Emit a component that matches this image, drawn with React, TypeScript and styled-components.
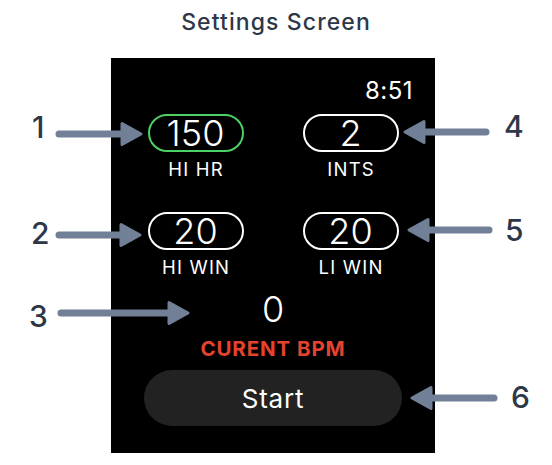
import React from "react";
import styled, { createGlobalStyle } from "styled-components";

const Global = createGlobalStyle`
  html, body { margin: 0; padding: 0; background: #ffffff; }
  body { font-family: Inter, "Noto Sans", sans-serif; }
`;

const Page = styled.div`
  width: 552px;
  height: 465px;
  display: flex;
  flex-direction: column;
  background: #fff;
  overflow: hidden;
`;

const Title = styled.h1`
  margin: 0;
  height: 58px;
  padding-top: 9px;
  box-sizing: border-box;
  text-align: center;
  font-family: Inter, sans-serif;
  font-weight: 500;
  font-size: 23px;
  line-height: 26px;
  color: #2d3748;
  letter-spacing: 1.1px;
`;

const Figure = styled.div`
  position: relative;
  flex: 1;
`;

const Screen = styled.div`
  margin-left: 111px;
  width: 324px;
  height: 395px;
  background: #000;
  box-sizing: border-box;
  padding: 19px 22px 26px;
  display: flex;
  flex-direction: column;
  color: #fff;
`;

const Time = styled.div`
  align-self: flex-end;
  font-size: 24px;
  line-height: 28px;
  font-weight: 400;
  letter-spacing: 0.5px;
`;

const Grid = styled.div`
  margin-top: 9px;
  margin-left: -22px;
  margin-right: -22px;
  display: grid;
  grid-template-columns: repeat(2, 96px);
  justify-content: center;
  column-gap: 59px;
  row-gap: 33px;
`;

const Field = styled.div`
  display: flex;
  flex-direction: column;
  align-items: center;
`;

const Pill = styled.div<{ $active?: boolean }>`
  width: 96px;
  height: 38px;
  box-sizing: border-box;
  border: 2px solid ${(p) => (p.$active ? "#4cd264" : "#ffffff")};
  border-radius: 19px;
  display: flex;
  align-items: center;
  justify-content: center;
  font-size: 36px;
  font-weight: 300;
  line-height: 1;
`;

const Label = styled.div`
  margin-top: 7px;
  font-size: 18.5px;
  line-height: 20px;
  letter-spacing: 1.2px;
  padding-left: 1.2px;
`;

const Bpm = styled.div`
  margin-top: 12px;
  text-align: center;
  font-size: 36px;
  font-weight: 300;
  line-height: 40px;
`;

const BpmLabel = styled.div`
  margin-top: 9px;
  text-align: center;
  font-size: 20.5px;
  font-weight: 700;
  line-height: 22px;
  letter-spacing: 0.9px;
  color: #e5432e;
`;

const StartButton = styled.button`
  margin-top: 10px;
  align-self: center;
  width: 258px;
  height: 56px;
  border: none;
  border-radius: 28px;
  background: #222222;
  color: #fff;
  font-family: Inter, sans-serif;
  font-size: 26px;
  font-weight: 400;
  letter-spacing: 0.8px;
`;

const Num = styled.div<{ $x: number; $y: number }>`
  position: absolute;
  left: ${(p) => p.$x}px;
  top: ${(p) => p.$y}px;
  font-size: 30px;
  line-height: 30px;
  font-weight: 500;
  color: #2d3748;
`;

const ArrowSvg = styled.svg<{ $x: number; $y: number }>`
  position: absolute;
  left: ${(p) => p.$x}px;
  top: ${(p) => p.$y}px;
  overflow: visible;
`;

const Arrow = ({ from, to, y }: { from: number; to: number; y: number }) => {
  const left = Math.min(from, to);
  const len = Math.abs(to - from);
  const right = to > from;
  const h = 26;
  const c = h / 2;
  const tailX = right ? 4 : len - 4;
  const tipX = right ? len - 2 : 2;
  const baseX = right ? len - 21 : 21;
  return (
    <ArrowSvg $x={left} $y={y - 58 - c} width={len} height={h} viewBox={`0 0 ${len} ${h}`}>
      <line x1={tailX} y1={c} x2={baseX} y2={c} stroke="#718096" strokeWidth={7} strokeLinecap="round" />
      <polygon
        points={`${baseX},${c - 10.5} ${tipX},${c} ${baseX},${c + 10.5}`}
        fill="#718096"
        stroke="#718096"
        strokeWidth={3}
        strokeLinejoin="round"
      />
    </ArrowSvg>
  );
};

const callouts = [
  { n: "1", nx: 32, ny: 116, from: 55, to: 143, y: 134 },
  { n: "2", nx: 31, ny: 222, from: 55, to: 142, y: 235 },
  { n: "3", nx: 29, ny: 305, from: 57, to: 190, y: 313 },
  { n: "4", nx: 504, ny: 115, from: 490, to: 403, y: 132 },
  { n: "5", nx: 505, ny: 219, from: 493, to: 407, y: 230 },
  { n: "6", nx: 511, ny: 386, from: 498, to: 410, y: 398 },
];

export default function App() {
  return (
    <Page>
      <Global />
      <Title>Settings Screen</Title>
      <Figure>
        <Screen>
          <Time>8:51</Time>
          <Grid>
            <Field>
              <Pill $active>150</Pill>
              <Label>HI HR</Label>
            </Field>
            <Field>
              <Pill>2</Pill>
              <Label>INTS</Label>
            </Field>
            <Field>
              <Pill>20</Pill>
              <Label>HI WIN</Label>
            </Field>
            <Field>
              <Pill>20</Pill>
              <Label>LI WIN</Label>
            </Field>
          </Grid>
          <Bpm>0</Bpm>
          <BpmLabel>CURENT BPM</BpmLabel>
          <StartButton>Start</StartButton>
        </Screen>
        {callouts.map((c) => (
          <React.Fragment key={c.n}>
            <Num $x={c.nx} $y={c.ny - 58 - 4}>{c.n}</Num>
            <Arrow from={c.from} to={c.to} y={c.y} />
          </React.Fragment>
        ))}
      </Figure>
    </Page>
  );
}
